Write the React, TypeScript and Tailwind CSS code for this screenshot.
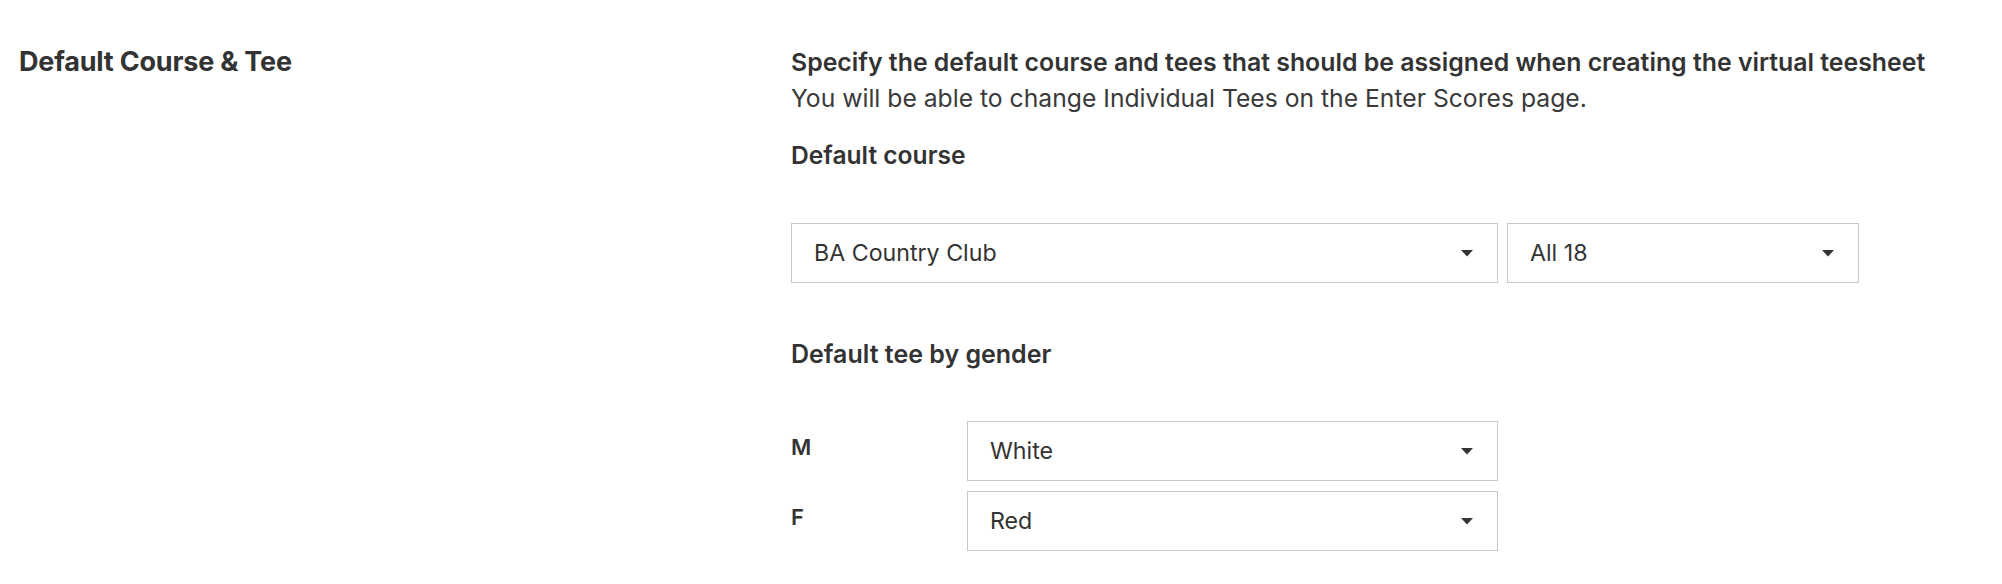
import React from 'react';

// Settings section — default course and tees for the virtual teesheet

const Caret = () => (
  <svg width="12" height="7" viewBox="0 0 12 7" className="shrink-0">
    <polygon points="0,0 12,0 6,6.5" fill="#333333" />
  </svg>
);

const SelectBox = ({ value, className }: { value: string; className: string }) => (
  <div
    className={`h-[60px] border border-[#c8c8c8] bg-white flex items-center justify-between pl-[22px] pr-[24px] ${className}`}
  >
    <span className="text-[23.2px] leading-none text-[#333333] mt-[1px]">{value}</span>
    <Caret />
  </div>
);

export default function App() {
  return (
    <div className="min-h-[584px] bg-white font-['Inter',sans-serif] text-[#333333] flex pt-[44px]">
      <div className="w-[791px] shrink-0 pl-[19px]">
        <h2 className="text-[27px] leading-[36px] font-bold tracking-[-0.2px]">Default Course &amp; Tee</h2>
      </div>

      <div className="flex-1">
        <p className="text-[24.85px] leading-[36px] font-semibold">
          Specify the default course and tees that should be assigned when creating the virtual teesheet
        </p>
        <p className="text-[24.7px] leading-[36px] font-normal text-[#3a3a3a]">
          You will be able to change Individual Tees on the Enter Scores page.
        </p>

        <h3 className="mt-[21px] text-[24.6px] leading-[36px] font-semibold">Default course</h3>

        <div className="mt-[50px] flex gap-[9px]">
          <SelectBox value="BA Country Club" className="w-[707px]" />
          <SelectBox value="All 18" className="w-[352px]" />
        </div>

        <h3 className="mt-[53px] text-[25px] leading-[36px] font-semibold">Default tee by gender</h3>

        <div className="mt-[49px] flex flex-col gap-[10px]">
          {[
            { g: 'M', tee: 'White' },
            { g: 'F', tee: 'Red' },
          ].map((row) => (
            <div key={row.g} className="flex items-center">
              <span className="w-[176px] shrink-0 text-[22px] font-semibold -mt-[7px]">{row.g}</span>
              <SelectBox value={row.tee} className="w-[531px]" />
            </div>
          ))}
        </div>
      </div>
    </div>
  );
}
